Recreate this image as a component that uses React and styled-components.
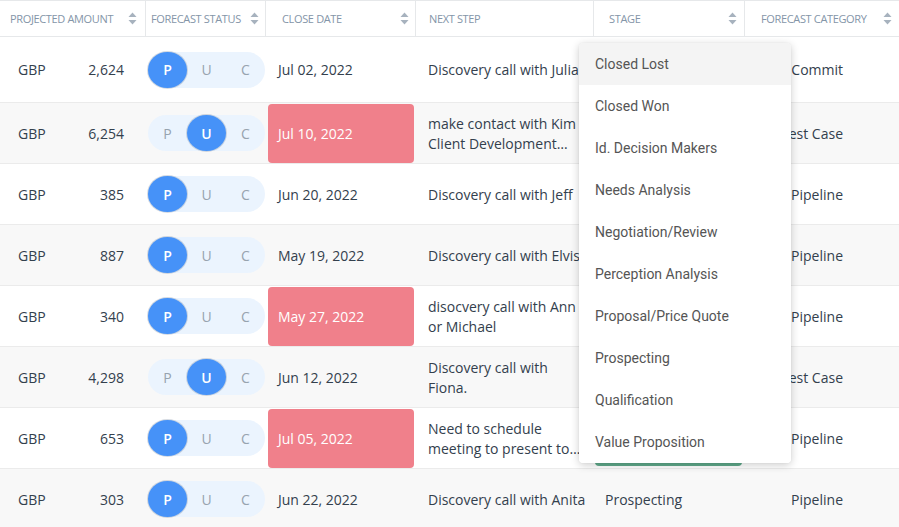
import React from "react";
import styled, { createGlobalStyle } from "styled-components";

const GlobalStyle = createGlobalStyle`
  html, body {
    margin: 0;
    padding: 0;
    background: #ffffff;
  }
  body {
    font-family: "Open Sans", "Liberation Sans", sans-serif;
    color: #34404c;
  }
`;

const COLUMNS = "145px 120px 150px 178px 151px 155px";

const deals = [
  { amount: "2,624", status: "P", date: "Jul 02, 2022", late: false, step: "Discovery call with Julia", stage: "", category: "Commit", first: true },
  { amount: "6,254", status: "U", date: "Jul 10, 2022", late: true, step: "make contact with Kim Client Development Manager", stage: "", category: "Best Case" },
  { amount: "385", status: "P", date: "Jun 20, 2022", late: false, step: "Discovery call with Jeff", stage: "", category: "Pipeline" },
  { amount: "887", status: "P", date: "May 19, 2022", late: false, step: "Discovery call with Elvis", stage: "", category: "Pipeline" },
  { amount: "340", status: "P", date: "May 27, 2022", late: true, step: "disocvery call with Ann or Michael", stage: "", category: "Pipeline" },
  { amount: "4,298", status: "U", date: "Jun 12, 2022", late: false, step: "Discovery call with Fiona.", stage: "", category: "Best Case" },
  { amount: "653", status: "P", date: "Jul 05, 2022", late: true, step: "Need to schedule meeting to present to the board", stage: "", category: "Pipeline", won: true },
  { amount: "303", status: "P", date: "Jun 22, 2022", late: false, step: "Discovery call with Anita", stage: "Prospecting", category: "Pipeline" },
];

const stages = [
  "Closed Lost",
  "Closed Won",
  "Id. Decision Makers",
  "Needs Analysis",
  "Negotiation/Review",
  "Perception Analysis",
  "Proposal/Price Quote",
  "Prospecting",
  "Qualification",
  "Value Proposition",
];

function SortIcon() {
  return (
    <svg width="9" height="13" viewBox="0 0 9 13">
      <path d="M4.5 0.5 L8.5 5 L0.5 5 Z" fill="#a7b2be" />
      <path d="M4.5 12.5 L8.5 8 L0.5 8 Z" fill="#a7b2be" />
    </svg>
  );
}

class App extends React.Component {
  render() {
    return (
      <Page>
        <GlobalStyle />
        <Header>
          <HeadCell pad="10px" iconPad="8px">
            <span>PROJECTED AMOUNT</span>
            <SortIcon />
          </HeadCell>
          <HeadCell pad="5px" iconPad="6px">
            <span>FORECAST STATUS</span>
            <SortIcon />
          </HeadCell>
          <HeadCell pad="16px" iconPad="6px">
            <span>CLOSE DATE</span>
            <SortIcon />
          </HeadCell>
          <HeadCell pad="13px">
            <span>NEXT STEP</span>
          </HeadCell>
          <HeadCell pad="15px" iconPad="7px">
            <span>STAGE</span>
            <SortIcon />
          </HeadCell>
          <HeadCell pad="16px" iconPad="7px">
            <span>FORECAST CATEGORY</span>
            <SortIcon />
          </HeadCell>
        </Header>

        {deals.map((d, i) => (
          <Row key={i} striped={i % 2 === 1} tall={d.first}>
            <AmountCell>
              <span>GBP</span>
              <span>{d.amount}</span>
            </AmountCell>
            <Cell pad="3px">
              <Toggle>
                {["P", "U", "C"].map((l) => (
                  <ToggleOption key={l} active={l === d.status}>
                    {l}
                  </ToggleOption>
                ))}
              </Toggle>
            </Cell>
            <Cell pad="3px">
              <DateBox late={d.late}>{d.date}</DateBox>
            </Cell>
            <Cell pad="13px">
              <StepText>{d.step}</StepText>
            </Cell>
            <Cell pad="2px">
              {d.won ? <StagePill /> : <StageText>{d.stage}</StageText>}
            </Cell>
            <CategoryCell>{d.category}</CategoryCell>
          </Row>
        ))}

        <Menu>
          {stages.map((s, i) => (
            <MenuItem key={s} highlighted={i === 0}>
              {s}
            </MenuItem>
          ))}
        </Menu>
      </Page>
    );
  }
}

const Page = styled.div`
  position: relative;
  width: 899px;
  height: 527px;
  overflow: hidden;
  background: #ffffff;
`;

const Header = styled.div`
  display: grid;
  grid-template-columns: ${COLUMNS};
  height: 37px;
  box-sizing: border-box;
  border-top: 1px solid #e6e8ea;
  border-bottom: 1px solid #e6e8ea;
`;

const HeadCell = styled.div`
  display: flex;
  align-items: center;
  justify-content: space-between;
  padding: 0 ${(p) => p.iconPad || "0"} 0 ${(p) => p.pad};
  font-size: 11px;
  letter-spacing: -0.35px;
  color: #8495a8;
  white-space: nowrap;
  border-left: 1px solid #e6e8ea;

  &:first-child {
    border-left: 0;
  }

  svg {
    flex-shrink: 0;
  }
`;

const Row = styled.div`
  display: grid;
  grid-template-columns: ${COLUMNS};
  height: ${(p) => (p.tall ? "66px" : "61px")};
  box-sizing: border-box;
  border-bottom: 1px solid #ebebeb;
  background: ${(p) => (p.striped ? "#f8f8f8" : "#ffffff")};
  font-size: 14px;
  color: #33404d;
`;

const Cell = styled.div`
  display: flex;
  align-items: center;
  padding-left: ${(p) => p.pad};
  min-width: 0;
`;

const CategoryCell = styled.div`
  display: flex;
  align-items: center;
  justify-content: flex-end;
  padding-right: 56px;
  white-space: nowrap;
`;

const AmountCell = styled.div`
  display: flex;
  align-items: center;
  justify-content: space-between;
  padding: 0 21px 0 18px;
`;

const Toggle = styled.div`
  display: flex;
  width: 117px;
  height: 36px;
  border-radius: 18px;
  background: #ebf4fe;
`;

const ToggleOption = styled.div`
  flex: 1;
  display: flex;
  align-items: center;
  justify-content: center;
  border-radius: 50%;
  font-size: 14px;
  background: ${(p) => (p.active ? "#4692f8" : "transparent")};
  color: ${(p) => (p.active ? "#ffffff" : "#97a3af")};
  font-weight: ${(p) => (p.active ? 600 : 400)};
  box-shadow: ${(p) => (p.active ? "0 0 0 1px rgba(90, 110, 140, 0.25)" : "none")};
`;

const DateBox = styled.div`
  display: flex;
  align-items: center;
  box-sizing: border-box;
  width: 146px;
  height: 100%;
  padding-left: 10px;
  font-size: 14px;

  ${(p) =>
    p.late
      ? `
    height: 59px;
    margin-top: 1px;
    border-radius: 4px;
    background: #f0808b;
    color: #ffffff;
  `
      : ""}
`;

const StepText = styled.div`
  padding-right: 4px;
  padding-top: 1px;
  line-height: 20px;
  display: -webkit-box;
  -webkit-line-clamp: 2;
  -webkit-box-orient: vertical;
  overflow: hidden;
`;

const StageText = styled.div`
  padding-left: 10px;
`;

const StagePill = styled.div`
  width: 147px;
  height: 56px;
  border-radius: 4px;
  background: #5fa98a;
`;

const Menu = styled.div`
  position: absolute;
  top: 43px;
  left: 579px;
  width: 212px;
  background: #ffffff;
  border-radius: 4px;
  box-shadow: 0 2px 8px rgba(0, 0, 0, 0.2), 0 0 1px rgba(0, 0, 0, 0.12);
  overflow: hidden;
`;

const MenuItem = styled.div`
  height: 42px;
  display: flex;
  align-items: center;
  padding-left: 16px;
  font-family: Roboto, "Liberation Sans", sans-serif;
  font-size: 14px;
  color: #555555;
  background: ${(p) => (p.highlighted ? "#f4f4f4" : "#ffffff")};
  white-space: nowrap;
`;

export default App;
